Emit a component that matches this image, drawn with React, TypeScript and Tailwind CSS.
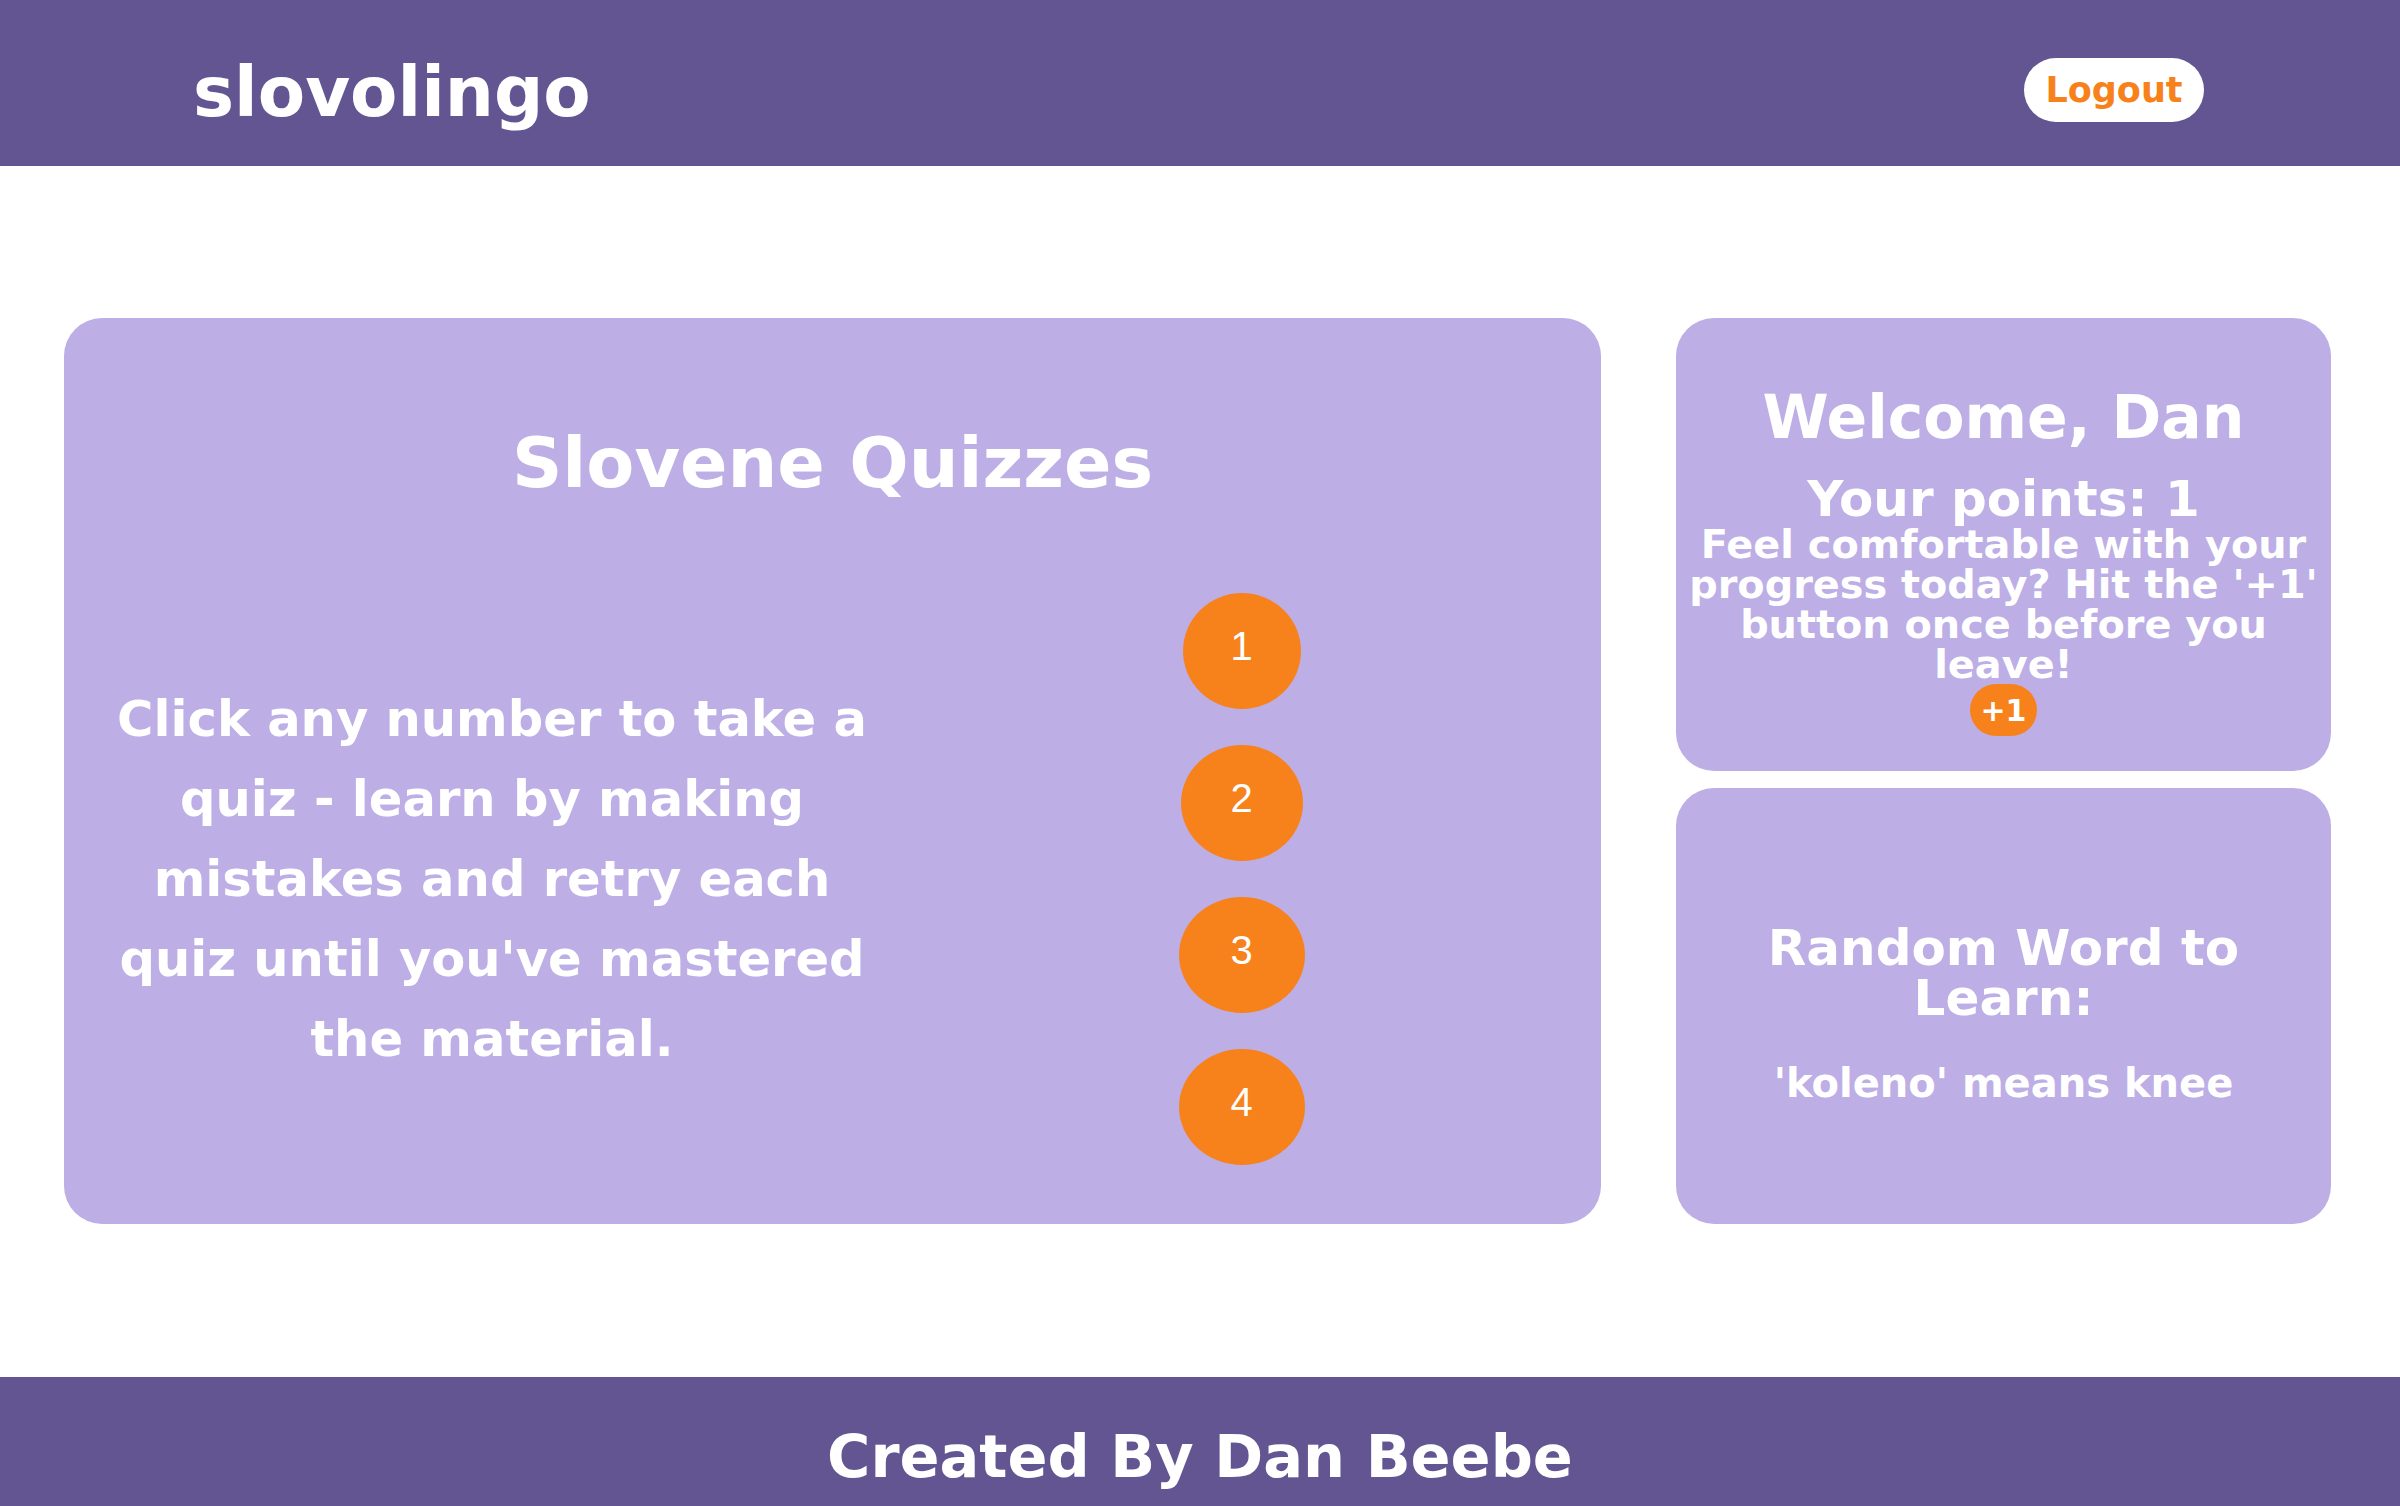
import React from "react"

const quizzes = [
  { n: 1, w: "w-[118px]" },
  { n: 2, w: "w-[122px]" },
  { n: 3, w: "w-[126px]" },
  { n: 4, w: "w-[126px]" },
]

const App: React.FC = () => {
  return (
    <div className="min-h-screen bg-white font-['DejaVu_Sans',sans-serif] font-bold leading-[normal] text-white">
      {/* top bar */}
      <header className="flex h-[166px] items-center justify-between bg-[#625591] pl-[193px] pr-[196px] pt-[14px]">
        <div className="mt-[4px] text-[69px]">slovolingo</div>
        <button className="flex h-[64px] w-[180px] items-center justify-center rounded-full bg-white text-[35px] font-bold text-[#f7821b]">
          Logout
        </button>
      </header>

      <main className="flex gap-[75px] pb-[153px] pl-[64px] pr-[69px] pt-[152px]">
        {/* quizzes */}
        <section className="flex-1 rounded-[38px] bg-[#bdaee6] pb-[59px] pt-[104px]">
          <h2 className="text-center text-[70px]">Slovene Quizzes</h2>
          <div className="mt-[89px] flex items-center">
            <p className="ml-[38px] w-[780px] text-center text-[49.6px] leading-[80px]">
              Click any number to take a quiz - learn by making mistakes and retry each quiz until you've mastered the material.
            </p>
            <div className="flex flex-1 flex-col items-center gap-[36px]">
              {quizzes.map((q) => (
                <button
                  key={q.n}
                  className={`flex h-[116px] ${q.w} items-center justify-center rounded-[50%] bg-[#f7821b] pb-[9px] font-['Liberation_Sans',Arial,sans-serif] text-[40px] font-normal text-white`}
                >
                  {q.n}
                </button>
              ))}
            </div>
          </div>
        </section>

        {/* side column */}
        <aside className="flex w-[655px] flex-col gap-[17px]">
          <div className="flex flex-col items-center rounded-[38px] bg-[#bdaee6] px-[8px] pb-[35px] pt-[64px] text-center">
            <h1 className="text-[60px]">Welcome, Dan</h1>
            <h2 className="mt-[18px] text-[50px]">Your points: 1</h2>
            <p className="-mt-[4px] text-[39.8px] leading-[40px]">
              Feel comfortable with your progress today? Hit the '+1' button once before you leave!
            </p>
            <button className="flex h-[52px] w-[67px] items-center justify-center rounded-full bg-[#f7821b] text-[30px] font-bold text-white">
              +1
            </button>
          </div>
          <div className="flex-1 rounded-[38px] bg-[#bdaee6] px-[8px] pt-[135px] text-center">
            <h2 className="text-[50px] leading-[50px]">Random Word to Learn:</h2>
            <p className="mt-[37px] text-[40px]">'koleno' means knee</p>
          </div>
        </aside>
      </main>

      <footer className="bg-[#625591] py-[45px] text-center text-[59px]">Created By Dan Beebe</footer>
    </div>
  )
}

export default App
